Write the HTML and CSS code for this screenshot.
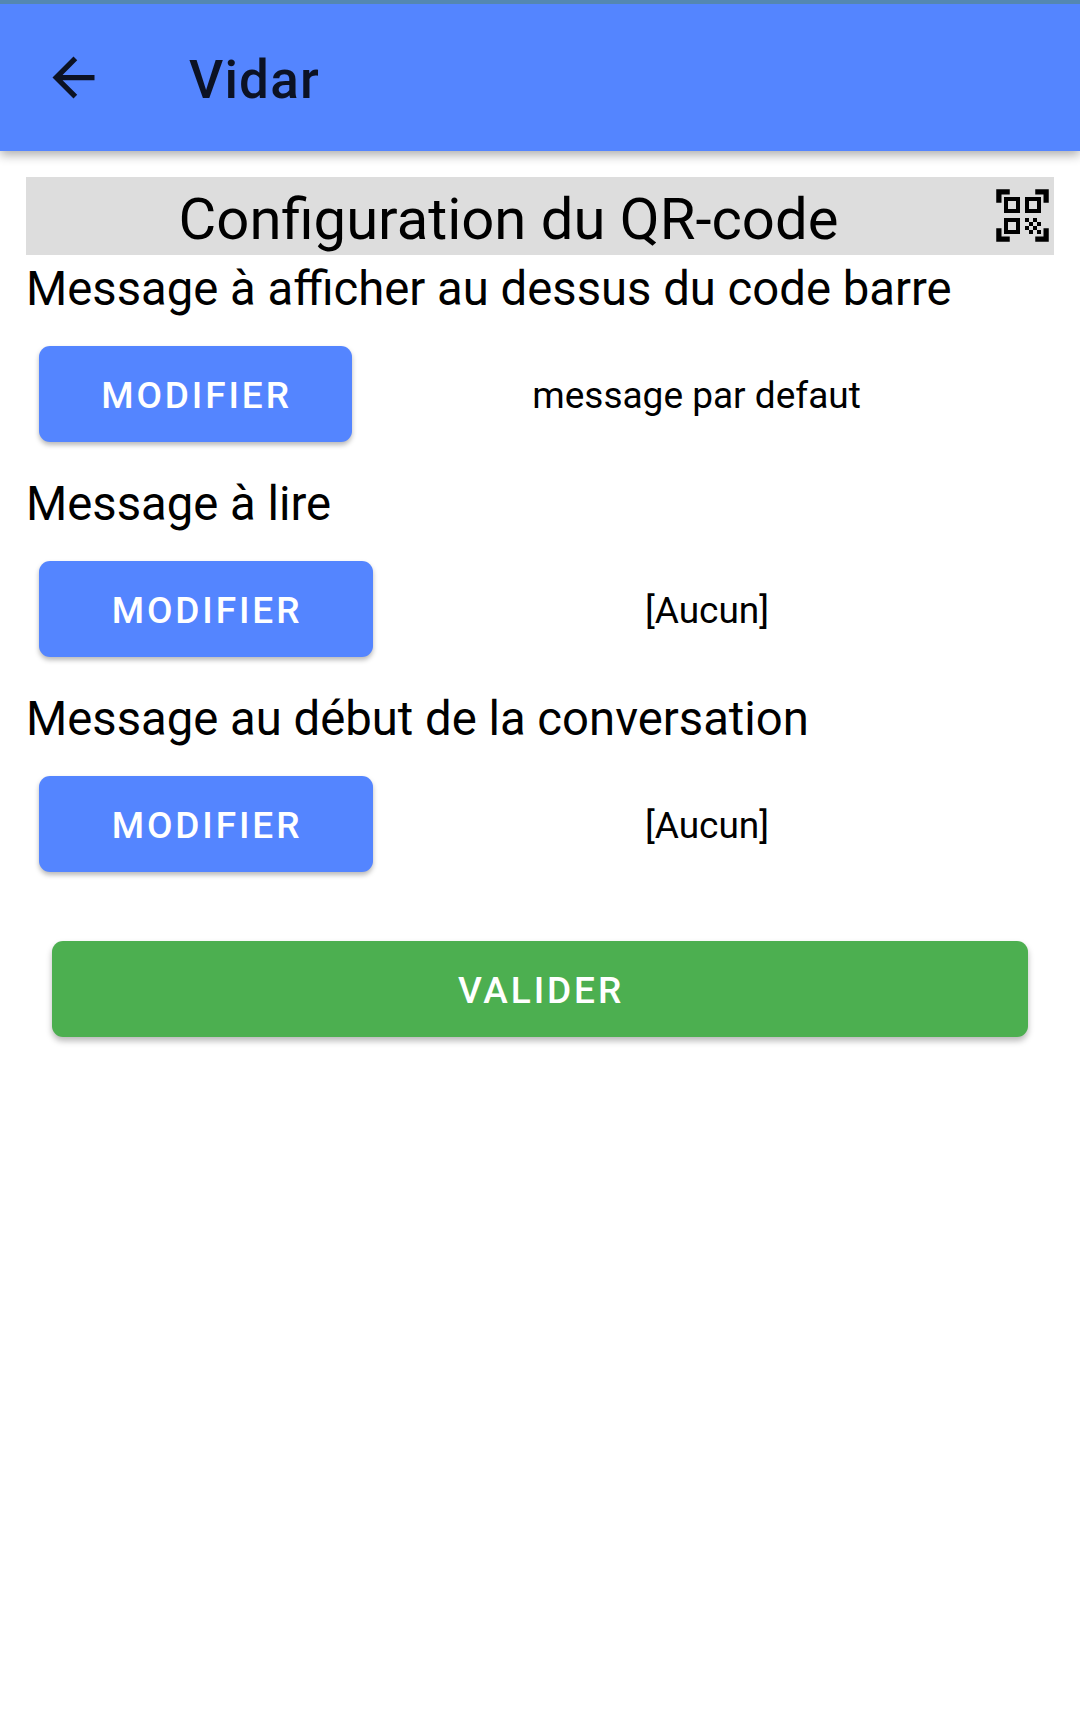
FILE: index.html
```html
<!DOCTYPE html>
<html lang="fr">
<head>
<meta charset="utf-8">
<title>Vidar</title>
<link rel="stylesheet" href="styles.css">
</head>
<body>
<header class="app-bar">
  <svg class="back" viewBox="0 0 24 24"><path d="M20 11H7.83l5.59-5.59L12 4l-8 8 8 8 1.41-1.41L7.83 13H20z"/></svg>
  <h1 class="app-title">Vidar</h1>
</header>
<main class="content">
  <div class="banner">
    <h2 class="banner-title">Configuration du QR-code</h2>
    <svg class="qr" viewBox="0 0 63 63">
      <path d="M5.250 5.250h13.500v5.250h-8.250v8.250H5.250zM57.750 5.250v13.500H52.500v-8.250h-8.250V5.250zM5.250 57.750v-13.500h5.250v8.250h8.250v5.250zM57.750 57.750h-13.500V52.500h8.250v-8.250h5.250z"/>
      <path fill-rule="evenodd" d="M13 13h16v16H13zm4 4v8h8v-8zM34 13h16v16H34zm4 4v8h8v-8zM13 34h16v16H13zm4 4v8h8v-8z"/>
      <path d="M34 34h4v4h-4zm8 0h4v4h-4zm-4 4h4v4h-4zm8 0h4v4h-4zm-12 4h4v4h-4zm8 0h4v4h-4zm-4 4h4v4h-4zm8 0h4v4h-4z"/>
    </svg>
  </div>
  <section class="setting">
    <h3 class="label">Message à afficher au dessus du code barre</h3>
    <div class="row"><button class="button button-first">MODIFIER</button><span class="value">message par defaut</span></div>
  </section>
  <section class="setting">
    <h3 class="label">Message à lire</h3>
    <div class="row"><button class="button">MODIFIER</button><span class="value">[Aucun]</span></div>
  </section>
  <section class="setting">
    <h3 class="label">Message au début de la conversation</h3>
    <div class="row"><button class="button">MODIFIER</button><span class="value">[Aucun]</span></div>
  </section>
  <button class="button submit">VALIDER</button>
</main>
</body>
</html>
```

FILE: styles.css
```css
* { box-sizing: border-box; }
body { margin: 0; min-height: 1725px; background: #fff; color: #000; font-family: Roboto, sans-serif; }
h1, h2, h3 { margin: 0; font-weight: 400; }
.app-bar { height: 151px; border-top: 4px solid #5487b1; background: #5485ff; display: flex; align-items: center; padding-left: 42px; box-shadow: 0 4px 10px rgba(0,0,0,.32); }
.back { width: 63px; height: 63px; fill: #0c1224; }
.app-title { margin-left: 84px; padding-top: 4px; font-size: 53px; font-weight: 500; letter-spacing: 1.2px; color: #0c1224; }
.content { padding: 26px 26px 0; }
.banner { display: flex; align-items: center; height: 78px; background: #ddd; }
.banner-title { flex: 1; text-align: center; padding-top: 6px; font-size: 58px; line-height: 68px; }
.qr { width: 63px; height: 63px; margin-bottom: 1px; }
.setting { height: 215px; }
.label { height: 78px; line-height: 68px; font-size: 47.25px; white-space: nowrap; }
.row { display: flex; align-items: center; padding: 13px 13px 0; }
.button { width: 334px; height: 96px; padding: 2px 0 0 2px; border: 0; border-radius: 11px; background: #5485ff; color: #fff; font: 500 37px Roboto, sans-serif; letter-spacing: 2.9px; box-shadow: 0 3px 5px rgba(0,0,0,.28); }
.button-first { width: 313px; }
.value { flex: 1; padding-top: 2px; text-align: center; font-size: 37px; }
.submit { display: block; width: 976px; margin: 41px 0 0 26px; background: #4caf50; box-shadow: 0 4px 6px rgba(0,0,0,.28); }
```
